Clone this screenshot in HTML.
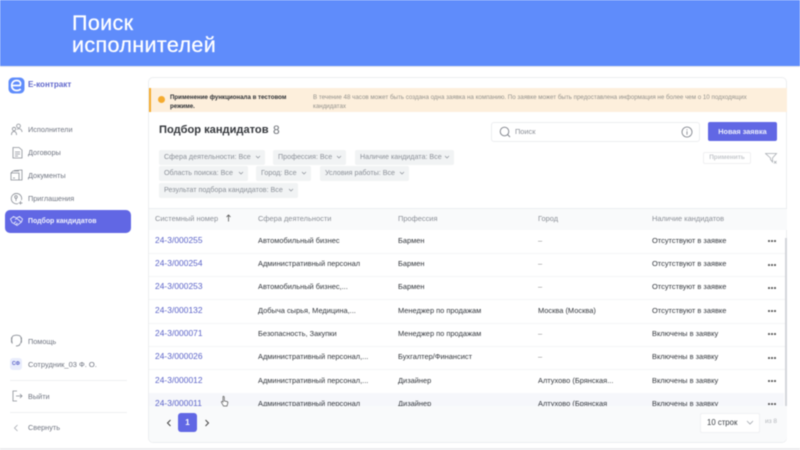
<!DOCTYPE html>
<html lang="ru"><head><meta charset="utf-8"><title>Поиск исполнителей</title>
<style>
html,body{margin:0;padding:0;width:800px;height:450px;overflow:hidden;background:#fff;font-family:"Liberation Sans","DejaVu Sans",sans-serif}
#p{position:relative;width:800px;height:450px;overflow:hidden;filter:blur(.4px)}
.a,.t{position:absolute;white-space:nowrap}
.t{line-height:12px}
.nav{font-size:7.300px;color:#6f7480;left:28px;margin-top:1px}
.chip{position:absolute;height:15px;background:#f1f3f4;border-radius:2px;color:#8b9098;font-size:7.150px;line-height:15px;padding-left:5px;box-sizing:border-box;white-space:nowrap}
.chip svg{position:absolute;right:4px;top:5px}
.l{color:#5a62c8;font-size:8.400px;left:155px;letter-spacing:.05px}
.c{color:#33373d;font-size:7.450px;margin-top:1px}
.h{color:#8b8f97;font-size:7.450px;top:213px}
.d{position:absolute;left:149px;width:638px;height:1px;background:#f4f5f6}
.dots{position:absolute;left:768px;width:8px;height:2px}
.dots i{position:absolute;width:1.600px;height:1.600px;background:#555;border-radius:50%;top:0}
.dots i:nth-child(1){left:0}.dots i:nth-child(2){left:3px}.dots i:nth-child(3){left:6px}
</style></head><body><div id="p">
<div class="a" style="left:0;top:0;width:800px;height:66px;background:#5f8cfb"></div>
<div class="a" style="left:0;top:66px;width:800px;height:1px;background:#e6e8ec"></div>
<div class="a" style="left:72px;top:12px;color:#fff;font-size:21.500px;letter-spacing:.37px;line-height:22px;font-weight:400;-webkit-text-stroke:.25px #fff">Поиск<br>исполнителей</div>

<svg class="a" style="left:8px;top:77px" width="17" height="17" viewBox="0 0 17 17"><rect width="16" height="16" x=".5" y=".5" rx="4.500" fill="#5f8cfb"/><path d="M3.500 8.500h8.600c1.400-3-.6-5-3.400-5-3 0-5 2-5 5s2 5 5 5c1.600 0 3-.5 4-1.500" fill="none" stroke="#fff" stroke-width="1.700"/></svg>
<div class="t" style="left:28px;top:79px;font-size:8.100px;font-weight:700;color:#6168cc">Е-контракт</div>

<svg class="a" style="left:10px;top:123px" width="13" height="13" viewBox="0 0 13 13" fill="none" stroke="#8a8e96" stroke-width=".8"><circle cx="4" cy="6" r="1.700"/><circle cx="8.500" cy="3" r="1.900"/><path d="M1.500 12c0-2.500 1-3.500 2.500-3.500S6.500 9.500 6.500 12M7 6.500c1-1 3-1 4 0 .7.700 1 1.500 1 2.500"/></svg>
<div class="t nav" style="top:123px">Исполнители</div>
<svg class="a" style="left:12px;top:146px" width="11" height="13" viewBox="0 0 11 13" fill="none" stroke="#8a8e96" stroke-width=".8"><path d="M1 1.500h6l3 2.500v8H1zM3 6h5M3 8h5M3 10h3"/></svg>
<div class="t nav" style="top:146px">Договоры</div>
<svg class="a" style="left:10px;top:169px" width="13" height="12" viewBox="0 0 13 12" fill="none" stroke="#8a8e96" stroke-width=".8"><path d="M1 4h8v7H1zM1 4l2-2h6M4 1.500 12 1v10H9M3 9h2"/></svg>
<div class="t nav" style="top:169px">Документы</div>
<svg class="a" style="left:10px;top:192px" width="13" height="13" viewBox="0 0 13 13" fill="none" stroke="#8a8e96" stroke-width=".8"><path d="M8 11.600A5.200 5.200 0 1 1 11.500 8"/><circle cx="6" cy="5" r="1.300"/><path d="M6 6.500V9M10.500 9v3.500M8.500 11h4"/></svg>
<div class="t nav" style="top:192px">Приглашения</div>

<div class="a" style="left:5px;top:210px;width:126px;height:23px;background:#6167e4;border-radius:5px"></div>
<svg class="a" style="left:10px;top:215px" width="13" height="12" viewBox="0 0 13 12" fill="none" stroke="#e6e8fb" stroke-width=".9"><path d="M.5 4 3.500 1.500 6.500 3 9.500 1.500 12.500 4 11.500 7 7 10.500 2 7.500zM5 4.500l2-1 4 3.500M4 8l2-1.500M6 9.500 7.500 8"/></svg>
<div class="t" style="left:28px;top:216px;font-size:6.950px;font-weight:700;color:#f1f2fd">Подбор кандидатов</div>

<svg class="a" style="left:10px;top:334px" width="13" height="14" viewBox="0 0 13 14" fill="none" stroke="#8a8e96" stroke-width=".9"><path d="M2.500 9.500C1.500 8.500 1.500 3 2.500 2.500 4 .8 9 .8 10.500 2.500c1 1 1 6 0 7M2.500 4H1.500v4h1M10.500 4h1v4h-1M10 9.500c0 1.500-1.500 2.500-4 2.500"/></svg>
<div class="t nav" style="top:335px">Помощь</div>
<div class="a" style="left:10px;top:358px;width:12px;height:12px;background:#e9edfc;border-radius:3px;color:#5a62c8;font-size:5px;font-weight:700;line-height:12px;text-align:center">СФ</div>
<div class="t nav" style="top:358px;font-size:7.500px">Сотрудник_03 Ф. О.</div>
<div class="a" style="left:10px;top:380px;width:117px;height:1px;background:#eef0f2"></div>
<svg class="a" style="left:12px;top:390px" width="11" height="12" viewBox="0 0 11 12" fill="none" stroke="#8a8e96" stroke-width=".8"><path d="M5 1H1v10h4M4 6h6M8 4l2 2-2 2"/></svg>
<div class="t nav" style="top:390px">Выйти</div>
<div class="a" style="left:10px;top:412px;width:117px;height:1px;background:#eef0f2"></div>
<svg class="a" style="left:13px;top:424px" width="6" height="8" viewBox="0 0 6 8" fill="none" stroke="#a5a9b0" stroke-width=".8"><path d="M4.500 1 1.500 4l3 3"/></svg>
<div class="t nav" style="top:421px">Свернуть</div>

<div class="a" style="left:148px;top:77px;width:639px;height:366px;border:1px solid #eceef0;border-radius:5px;box-sizing:border-box;background:#fff"></div>
<div class="a" style="left:149px;top:88px;width:638px;height:24px;background:#fdefdc"></div>
<div class="a" style="left:149px;top:88px;width:2px;height:24px;background:#f5ab2e"></div>
<div class="a" style="left:158px;top:96px;width:7px;height:7px;border-radius:50%;background:#f5ab2e"></div>
<div class="a" style="left:170px;top:94px;font-size:6.150px;line-height:8.500px;font-weight:700;color:#2c2f33">Применение функционала в тестовом<br>режиме.</div>
<div class="a" style="left:313px;top:94px;font-size:6.200px;line-height:8.500px;color:#92918c">В течение 48 часов может быть создана одна заявка на компанию. По заявке может быть предоставлена информация не более чем о 10 подходящих<br>кандидатах</div>

<div class="a" style="left:159px;top:122px;font-size:11.100px;line-height:16px;font-weight:700;color:#33363b">Подбор кандидатов</div>
<div class="a" style="left:273px;top:122px;font-size:12px;line-height:16px;color:#6e7278">8</div>

<div class="a" style="left:491px;top:122px;width:209px;height:20px;border:1px solid #eceef0;border-radius:3px;box-sizing:border-box"></div>
<svg class="a" style="left:499px;top:126px" width="12" height="12" viewBox="0 0 12 12" fill="none" stroke="#7a7e86" stroke-width=".9"><circle cx="5.500" cy="5.500" r="4.300"/><path d="m8.700 8.700 2.300 2.300"/></svg>
<div class="t" style="left:515px;top:126px;font-size:7.400px;color:#8b8f97">Поиск</div>
<svg class="a" style="left:681px;top:126px" width="12" height="12" viewBox="0 0 12 12" fill="none" stroke="#7a7e86" stroke-width=".8"><circle cx="6" cy="6" r="5"/><path d="M6 5.300v3.500M6 3.200v1"/></svg>
<div class="a" style="left:708px;top:122px;width:69px;height:19px;background:#6167e4;border-radius:2px;color:#eceefc;font-size:7.300px;font-weight:700;line-height:19px;text-align:center">Новая заявка</div>
<div class="a" style="left:703px;top:152px;width:48px;height:12px;border:1px solid #eff0f2;border-radius:2px;box-sizing:border-box;color:#c5c8cc;font-size:6.400px;line-height:10px;text-align:center;font-weight:700">Применить</div>
<svg class="a" style="left:765px;top:153px" width="13" height="11" viewBox="0 0 13 11" fill="none" stroke="#a8acb2" stroke-width=".8"><path d="M.5.500h11L7.500 5v4L5.500 6.500v-1.500zM9 8l2.500 2.500M11.500 8 9 10.500"/></svg>

<div class="chip" style="left:159px;top:150px;width:106px">Сфера деятельности: Все<svg width="6" height="5"><path d="M1 1l2 2 2-2" fill="none" stroke="#8b9098" stroke-width=".7"/></svg></div>
<div class="chip" style="left:273px;top:150px;width:73px">Профессия: Все<svg width="6" height="5"><path d="M1 1l2 2 2-2" fill="none" stroke="#8b9098" stroke-width=".7"/></svg></div>
<div class="chip" style="left:355px;top:150px;width:99px">Наличие кандидата: Все<svg width="6" height="5"><path d="M1 1l2 2 2-2" fill="none" stroke="#8b9098" stroke-width=".7"/></svg></div>
<div class="chip" style="left:159px;top:166px;width:89px">Область поиска: Все<svg width="6" height="5"><path d="M1 1l2 2 2-2" fill="none" stroke="#8b9098" stroke-width=".7"/></svg></div>
<div class="chip" style="left:256px;top:166px;width:55px">Город: Все<svg width="6" height="5"><path d="M1 1l2 2 2-2" fill="none" stroke="#8b9098" stroke-width=".7"/></svg></div>
<div class="chip" style="left:320px;top:166px;width:89px">Условия работы: Все<svg width="6" height="5"><path d="M1 1l2 2 2-2" fill="none" stroke="#8b9098" stroke-width=".7"/></svg></div>
<div class="chip" style="left:159px;top:183px;width:139px">Результат подбора кандидатов: Все<svg width="6" height="5"><path d="M1 1l2 2 2-2" fill="none" stroke="#8b9098" stroke-width=".7"/></svg></div>

<div class="a" style="left:149px;top:208px;width:638px;height:22px;background:#f9fafb;border-top:1px solid #eceef0;box-sizing:border-box"></div>
<div class="t h" style="left:155px">Системный номер</div>
<svg class="a" style="left:225px;top:214px" width="7" height="8" viewBox="0 0 7 8" fill="none" stroke="#555" stroke-width=".8"><path d="M3.500 7.500V1M1.500 3l2-2 2 2"/></svg>
<div class="t h" style="left:258px">Сфера деятельности</div>
<div class="t h" style="left:398px">Профессия</div>
<div class="t h" style="left:538px">Город</div>
<div class="t h" style="left:652px">Наличие кандидатов</div>

<div class="d" style="top:253px"></div><div class="d" style="top:276px"></div><div class="d" style="top:299px"></div><div class="d" style="top:323px"></div><div class="d" style="top:346px"></div><div class="d" style="top:369px"></div>
<div class="a" style="left:149px;top:393px;width:635px;height:13px;background:#f6f7fb"></div>

<div class="t l" style="top:234px">24-3/000255</div><div class="t c" style="left:258px;top:234px">Автомобильный бизнес</div><div class="t c" style="left:398px;top:234px">Бармен</div><div class="t c" style="left:538px;top:234px;color:#888">–</div><div class="t c" style="left:652px;top:234px">Отсутствуют в заявке</div><div class="dots" style="top:240px"><i></i><i></i><i></i></div>
<div class="t l" style="top:257px">24-3/000254</div><div class="t c" style="left:258px;top:257px">Административный персонал</div><div class="t c" style="left:398px;top:257px">Бармен</div><div class="t c" style="left:538px;top:257px;color:#888">–</div><div class="t c" style="left:652px;top:257px">Отсутствуют в заявке</div><div class="dots" style="top:264px"><i></i><i></i><i></i></div>
<div class="t l" style="top:280px">24-3/000253</div><div class="t c" style="left:258px;top:280px">Автомобильный бизнес,...</div><div class="t c" style="left:398px;top:280px">Бармен</div><div class="t c" style="left:538px;top:280px;color:#888">–</div><div class="t c" style="left:652px;top:280px">Отсутствуют в заявке</div><div class="dots" style="top:287px"><i></i><i></i><i></i></div>
<div class="t l" style="top:304px">24-3/000132</div><div class="t c" style="left:258px;top:304px">Добыча сырья, Медицина,...</div><div class="t c" style="left:398px;top:304px">Менеджер по продажам</div><div class="t c" style="left:538px;top:304px">Москва (Москва)</div><div class="t c" style="left:652px;top:304px">Отсутствуют в заявке</div><div class="dots" style="top:310px"><i></i><i></i><i></i></div>
<div class="t l" style="top:327px">24-3/000071</div><div class="t c" style="left:258px;top:327px">Безопасность, Закупки</div><div class="t c" style="left:398px;top:327px">Менеджер по продажам</div><div class="t c" style="left:538px;top:327px;color:#888">–</div><div class="t c" style="left:652px;top:327px">Включены в заявку</div><div class="dots" style="top:333px"><i></i><i></i><i></i></div>
<div class="t l" style="top:350px">24-3/000026</div><div class="t c" style="left:258px;top:350px">Административный персонал,...</div><div class="t c" style="left:398px;top:350px">Бухгалтер/Финансист</div><div class="t c" style="left:538px;top:350px;color:#888">–</div><div class="t c" style="left:652px;top:350px">Включены в заявку</div><div class="dots" style="top:357px"><i></i><i></i><i></i></div>
<div class="t l" style="top:374px">24-3/000012</div><div class="t c" style="left:258px;top:374px">Административный персонал,...</div><div class="t c" style="left:398px;top:374px">Дизайнер</div><div class="t c" style="left:538px;top:374px">Алтухово (Брянская...</div><div class="t c" style="left:652px;top:374px">Включены в заявку</div><div class="dots" style="top:380px"><i></i><i></i><i></i></div>
<div class="t l" style="top:397px">24-3/000011</div><div class="t c" style="left:258px;top:397px">Административный персонал</div><div class="t c" style="left:398px;top:397px">Дизайнер</div><div class="t c" style="left:538px;top:397px">Алтухово (Брянская</div><div class="t c" style="left:652px;top:397px">Включены в заявку</div><div class="dots" style="top:403px"><i></i><i></i><i></i></div>

<div class="a" style="left:785px;top:238px;width:2px;height:168px;background:#d3d5da"></div>
<div class="a" style="left:149px;top:406px;width:638px;height:36px;background:#f9fafb;border-radius:0 0 5px 5px"></div>

<svg class="a" style="left:220px;top:395px" width="9" height="12" viewBox="0 0 9 12" fill="#fff" stroke="#555" stroke-width=".7"><path d="M3 1.500c.6-.6 1.300 0 1.300.8V6l2.500.5c.8.200 1.200.7 1 1.500L7 11H3.500L1.500 7.500C1 6.500 2 6 3 7z"/></svg>

<svg class="a" style="left:166px;top:419px" width="6" height="8" viewBox="0 0 6 8" fill="none" stroke="#444" stroke-width="1"><path d="M4.500 1 1.500 4l3 3"/></svg>
<div class="a" style="left:178px;top:413px;width:19px;height:19px;background:#6167e4;border-radius:3px;color:#fff;font-size:8px;font-weight:700;line-height:19px;text-align:center">1</div>
<svg class="a" style="left:204px;top:419px" width="6" height="8" viewBox="0 0 6 8" fill="none" stroke="#444" stroke-width="1"><path d="M1.500 1l3 3-3 3"/></svg>
<div class="a" style="left:700px;top:413px;width:60px;height:20px;background:#fff;border:1px solid #f0f1f3;border-radius:2px;box-sizing:border-box"></div>
<div class="t" style="left:707px;top:417px;font-size:7.800px;color:#3c4046">10 строк</div>
<svg class="a" style="left:746px;top:420px" width="8" height="6" viewBox="0 0 8 6" fill="none" stroke="#a2a6ad" stroke-width=".8"><path d="M1 1l3 3 3-3"/></svg>
<div class="t" style="left:765px;top:416px;font-size:6.500px;color:#b3b6bb">из 8</div>
<div class="a" style="left:0;top:448px;width:800px;height:2px;background:#ececee"></div>
</div></body></html>
